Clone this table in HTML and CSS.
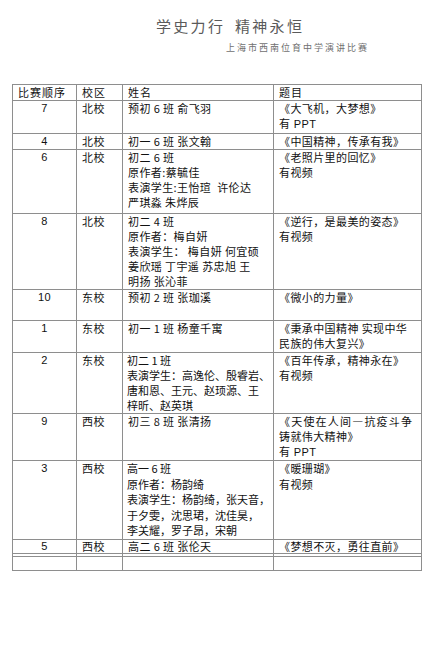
FILE: index.html
```html
<!DOCTYPE html>
<html lang="zh-CN">
<head>
<meta charset="utf-8">
<title>学史力行 精神永恒</title>
<link rel="stylesheet" href="styles.css">
</head>
<body>
<div class="page">
  <h1 class="title">学史力行&ensp;精神永恒</h1>
  <p class="subtitle">上海市西南位育中学演讲比赛</p>
  <table class="sheet">
    <colgroup>
      <col class="c-order">
      <col class="c-campus">
      <col class="c-name">
      <col class="c-topic">
    </colgroup>
    <tr class="head h15">
      <td class="left">比赛顺序</td><td>校区</td><td>姓名</td><td>题目</td>
    </tr>
    <tr class="h33">
      <td class="num">7</td><td>北校</td><td>预初 6 班 俞飞羽</td><td>《大飞机，大梦想》<br><span class="lat">有 PPT</span></td>
    </tr>
    <tr class="h15">
      <td class="num">4</td><td>北校</td><td>初一 6 班 张文翰</td><td>《中国精神，传承有我》</td>
    </tr>
    <tr class="h64">
      <td class="num">6</td><td>北校</td><td>初二 6 班<br>原作者:蔡毓佳<br>表演学生:王怡瑄&ensp;许伦达<br>严琪淼 朱烨辰</td><td>《老照片里的回忆》<br>有视频</td>
    </tr>
    <tr class="h76">
      <td class="num">8</td><td>北校</td><td>初二 4 班<br>原作者：梅自妍<br>表演学生：&nbsp;梅自妍 何宜硕<br>姜欣瑶 丁宇遥 苏忠旭 王<br>明扬 张沁菲</td><td>《逆行，是最美的姿态》<br>有视频</td>
    </tr>
    <tr class="h31">
      <td class="num">10</td><td>东校</td><td>预初 2 班 张珈溪</td><td>《微小的力量》</td>
    </tr>
    <tr class="h32">
      <td class="num">1</td><td>东校</td><td>初一 1 班 杨童千寓</td><td>《秉承中国精神 实现中华<br>民族的伟大复兴》</td>
    </tr>
    <tr class="h61">
      <td class="num">2</td><td>东校</td><td class="tight">初二 1 班<br>表演学生：高逸伦、殷睿岩、<br>唐和恩、王元、赵顼源、王<br>梓昕、赵英琪</td><td>《百年传承，精神永在》<br>有视频</td>
    </tr>
    <tr class="h47">
      <td class="num">9</td><td>西校</td><td>初三 8 班 张清扬</td><td><span class="wide">《天使在人间—抗疫斗争</span><br>铸就伟大精神》<br><span class="lat">有 PPT</span></td>
    </tr>
    <tr class="h79">
      <td class="num">3</td><td>西校</td><td class="tight">高一 6 班<br>原作者：杨韵绮<br>表演学生：杨韵绮，张天音，<br>于夕雯，沈思珺，沈佳昊，<br>李关耀，罗子昂，宋朝</td><td>《暖珊瑚》<br>有视频</td>
    </tr>
    <tr class="h13">
      <td class="num">5</td><td>西校</td><td>高二 6 班 张伦天</td><td>《梦想不灭，勇往直前》</td>
    </tr>
    <tr class="h3 thin">
      <td></td><td></td><td></td><td></td>
    </tr>
    <tr class="h14">
      <td></td><td></td><td></td><td></td>
    </tr>
  </table>
</div>
</body>
</html>
```
FILE: styles.css
```css
html, body {
  margin: 0;
  padding: 0;
  background: #ffffff;
}

.page {
  width: 433px;
  padding-top: 16px;
  font-family: "Noto Sans CJK SC", "Noto Sans", sans-serif;
}

.title {
  margin: 0 0 0 156px;
  font-size: 15px;
  line-height: 20px;
  font-weight: 400;
  letter-spacing: 2.3px;
  color: #5a5a5a;
  white-space: nowrap;
}

.subtitle {
  margin: 6px 0 0 226px;
  font-size: 9px;
  line-height: 12px;
  letter-spacing: 2px;
  color: #707070;
  white-space: nowrap;
}

.sheet {
  margin: 30px 0 0 12px;
  width: 409px;
  table-layout: fixed;
  border-collapse: collapse;
  font-size: 11px;
  line-height: 15px;
  letter-spacing: 0.4px;
  color: #111111;
}

.c-order { width: 64px; }
.c-campus { width: 46px; }
.c-name { width: 151px; }
.c-topic { width: 148px; }

.sheet td {
  border: 1px solid #8e8e8e;
  padding: 0 0 0 5px;
  vertical-align: top;
  white-space: nowrap;
}

.sheet td.tight {
  letter-spacing: 0;
  padding-left: 4px;
}

.sheet td.num {
  text-align: center;
  padding-left: 0;
  font-family: "Liberation Sans", Arial, sans-serif;
}

.head td {
  letter-spacing: 1px;
}

.lat {
  font-family: "Liberation Sans", Arial, sans-serif;
}

.wide {
  letter-spacing: 1.2px;
}

.h15 { height: 15px; }
.h33 { height: 33px; }
.h64 { height: 64px; }
.h76 { height: 76px; }
.h31 { height: 31px; }
.h32 { height: 32px; }
.h61 { height: 61px; }
.h47 { height: 47px; }
.h79 { height: 79px; }
.h79 td { line-height: 15.6px; }
.h13 { height: 13px; }
.h13 td { line-height: 13px; }
.h3 { height: 3px; }
.h14 { height: 14px; }

.thin td {
  padding: 0;
  line-height: 0;
  font-size: 0;
}
```
